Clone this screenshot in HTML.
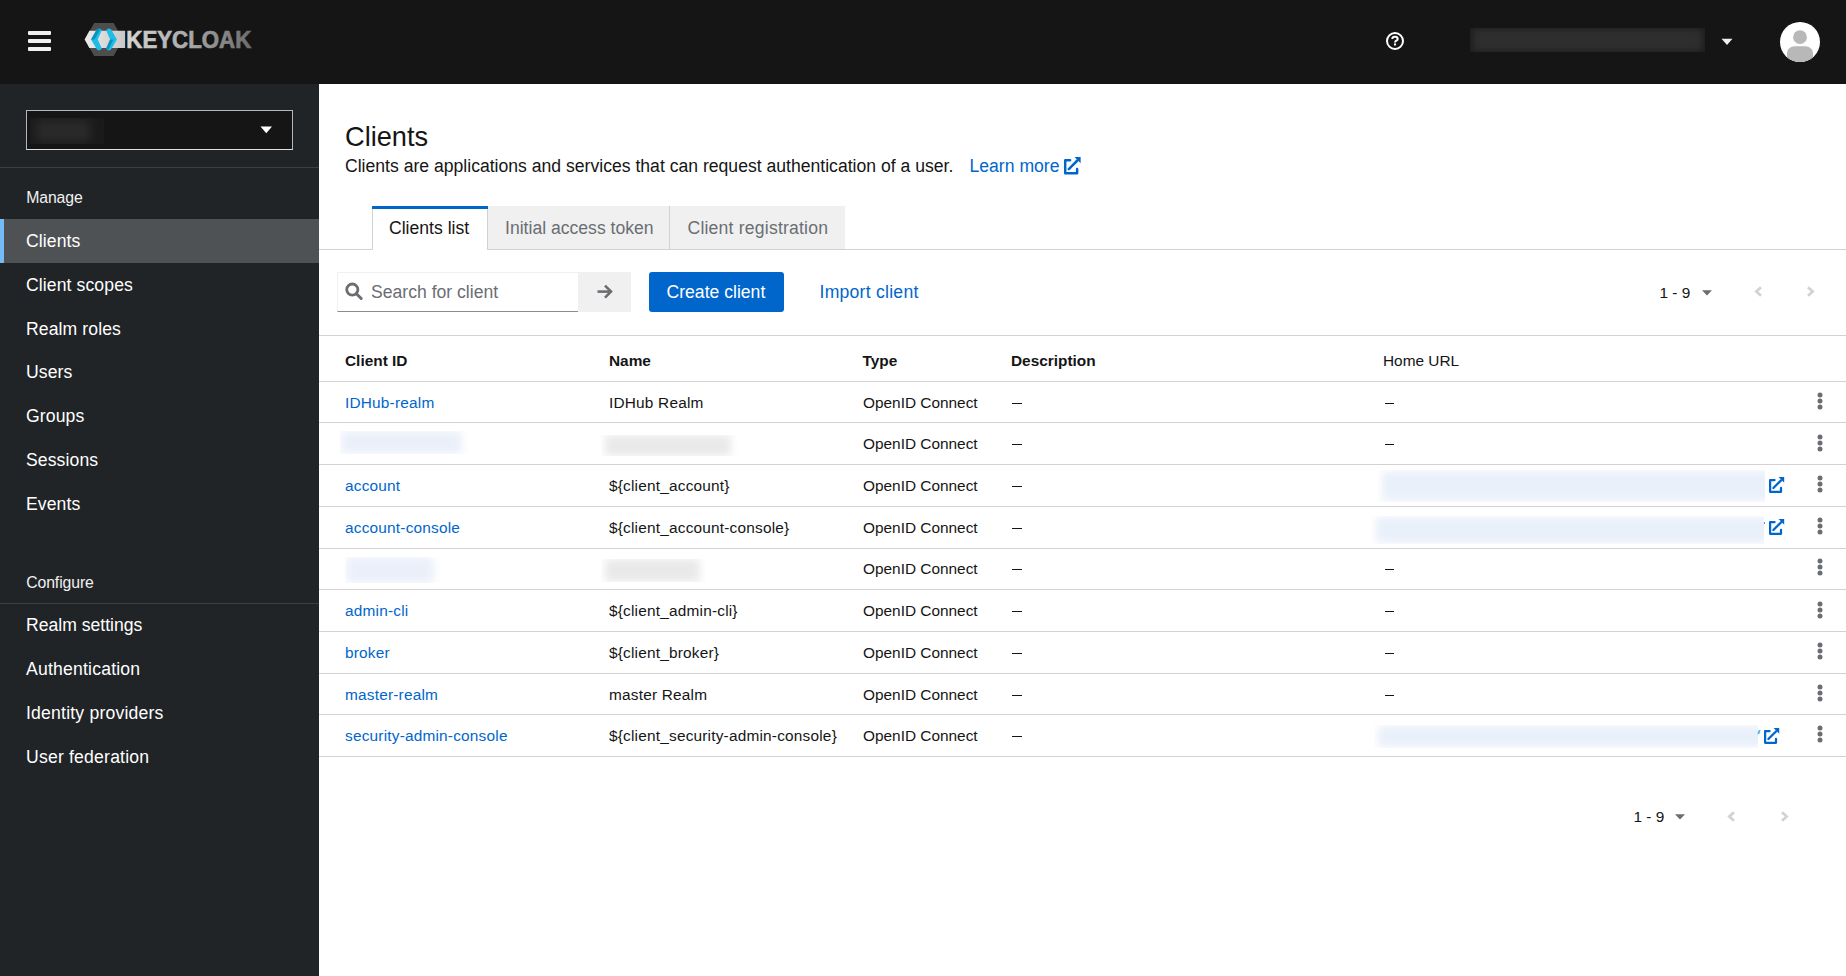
<!DOCTYPE html>
<html><head><meta charset="utf-8"><title>Clients</title>
<style>
*{box-sizing:border-box;margin:0;padding:0}
html,body{width:1846px;height:976px;overflow:hidden;background:#fff;font-family:"Liberation Sans", sans-serif}
.t{position:absolute;white-space:nowrap}
.r{position:absolute;display:block}
</style></head><body>
<div class="r" style="left:0px;top:0px;width:1846px;height:84px;background:#151515"></div>
<div class="r" style="left:28px;top:31px;width:23px;height:4px;background:#f0f0f0;border-radius:1px"></div>
<div class="r" style="left:28px;top:39px;width:23px;height:4px;background:#f0f0f0;border-radius:1px"></div>
<div class="r" style="left:28px;top:47px;width:23px;height:4px;background:#f0f0f0;border-radius:1px"></div>
<svg class="r" style="left:80px;top:18px" width="180" height="46" viewBox="0 0 180 46">
<defs>
<linearGradient id="kg" x1="0" y1="0" x2="1" y2="0"><stop offset="0" stop-color="#d6d6d6"/><stop offset="0.5" stop-color="#a8a8a8"/><stop offset="1" stop-color="#6c6c6c"/></linearGradient>
<linearGradient id="bg" x1="0" y1="0" x2="1" y2="0"><stop offset="0" stop-color="#ececec"/><stop offset="1" stop-color="#c8c8c8"/></linearGradient>
</defs>
<polygon points="14.2,5 33.6,5 43,21.45 33.6,37.9 14.2,37.9 4.8,21.45" fill="#4d4d4d"/>
<polygon points="4.65,21.4 9.4,12.7 45.1,12.7 45.1,29.9 9.4,29.9" fill="url(#bg)"/>
<polygon points="11,21.4 17.1,11.1 19.6,10.4 21.9,12 17.8,21.4 21.9,30.8 19.6,32.4 17.1,31.7" fill="#1cbde6"/>
<polygon points="11,21.4 17.1,11.1 19.6,10.4 20.3,11 14.6,21.4" fill="#0a92bd"/>
<polygon points="36.95,21.4 30.85,11.1 28.35,10.4 26.05,12 30.15,21.4 26.05,30.8 28.35,32.4 30.85,31.7" fill="#1cbde6"/>
<polygon points="26.05,30.8 30.15,21.4 33.4,21.4 28.5,31.5" fill="#0a92bd"/>
<text x="46.3" y="30" font-family="Liberation Sans" font-weight="bold" font-size="24.2" fill="url(#kg)" stroke="url(#kg)" stroke-width="0.7" textLength="125" lengthAdjust="spacingAndGlyphs">KEYCLOAK</text>
</svg>
<svg class="r" style="left:1385px;top:31px" width="20" height="20" viewBox="0 0 20 20">
<circle cx="10" cy="10" r="8" fill="none" stroke="#fff" stroke-width="2"/>
<path d="M7.3 7.9 C7.3 4.9 12.7 4.9 12.7 7.9 C12.7 9.8 10 9.6 10 11.4" fill="none" stroke="#fff" stroke-width="2"/>
<rect x="8.95" y="12.4" width="2.1" height="2.1" fill="#fff"/>
</svg>
<div class="r" style="left:1470px;top:28px;width:235px;height:24px;overflow:hidden;background:#1d1d1d"><div style="position:absolute;left:3px;top:1px;right:3px;bottom:1px;background:#2e2e2e;filter:blur(3px)"></div></div>
<svg class="r" style="left:1721px;top:38px" width="12" height="8" viewBox="0 0 12 8"><polygon points="0.5,0.7 11.5,0.7 6,7" fill="#f0f0f0"/></svg>
<svg class="r" style="left:1779px;top:21px" width="42" height="42" viewBox="0 0 42 42">
<defs><clipPath id="av"><circle cx="21" cy="21" r="20"/></clipPath></defs>
<circle cx="21" cy="21" r="20" fill="#fff"/>
<g clip-path="url(#av)">
<circle cx="21" cy="16.2" r="6.9" fill="#b8b8b8"/>
<path d="M8 42 V33 C8 27.8 11.5 25.3 17 25.3 H25 C30.5 25.3 34 27.8 34 33 V42 Z" fill="#b8b8b8"/>
</g></svg>
<div class="r" style="left:0px;top:84px;width:319px;height:892px;background:#212427"></div>
<div class="r" style="left:26px;top:110px;width:267px;height:40px;background:#151515;border:1px solid #b4b6b8;border-bottom-color:#e0e0e0"></div>
<div class="r" style="left:30px;top:118px;width:74px;height:26px;overflow:hidden;background:#1a1a1a"><div style="position:absolute;left:6px;top:2px;right:14px;bottom:2px;background:#2a2a2a;filter:blur(5px)"></div></div>
<svg class="r" style="left:260px;top:126px" width="13" height="8" viewBox="0 0 13 8"><polygon points="0.5,0.5 12,0.5 6.25,7.2" fill="#fff"/></svg>
<div class="r" style="left:0px;top:167px;width:319px;height:1px;background:#3c3f42"></div>
<div class="t" style="left:26.20px;top:190.23px;font-size:15.8px;line-height:15.8px;color:#f0f0f0;font-weight:normal;letter-spacing:-0.1px">Manage</div>
<div class="r" style="left:0px;top:219px;width:319px;height:44px;background:#4f5255"></div>
<div class="r" style="left:0px;top:219px;width:4px;height:44px;background:#73bcf7"></div>
<div class="t" style="left:26.00px;top:232.70px;font-size:17.6px;line-height:17.6px;color:#fff;font-weight:normal;letter-spacing:0.1px">Clients</div>
<div class="t" style="left:26.00px;top:276.60px;font-size:17.6px;line-height:17.6px;color:#fff;font-weight:normal;letter-spacing:0.1px">Client scopes</div>
<div class="t" style="left:26.00px;top:320.50px;font-size:17.6px;line-height:17.6px;color:#fff;font-weight:normal;letter-spacing:0.1px">Realm roles</div>
<div class="t" style="left:26.00px;top:364.40px;font-size:17.6px;line-height:17.6px;color:#fff;font-weight:normal;letter-spacing:0.1px">Users</div>
<div class="t" style="left:26.00px;top:408.30px;font-size:17.6px;line-height:17.6px;color:#fff;font-weight:normal;letter-spacing:0.1px">Groups</div>
<div class="t" style="left:26.00px;top:452.20px;font-size:17.6px;line-height:17.6px;color:#fff;font-weight:normal;letter-spacing:0.1px">Sessions</div>
<div class="t" style="left:26.00px;top:496.10px;font-size:17.6px;line-height:17.6px;color:#fff;font-weight:normal;letter-spacing:0.1px">Events</div>
<div class="t" style="left:26.20px;top:575.23px;font-size:15.8px;line-height:15.8px;color:#f0f0f0;font-weight:normal;letter-spacing:-0.1px">Configure</div>
<div class="r" style="left:0px;top:603px;width:319px;height:1px;background:#3c3f42"></div>
<div class="t" style="left:26.00px;top:616.70px;font-size:17.6px;line-height:17.6px;color:#fff;font-weight:normal;letter-spacing:0px">Realm settings</div>
<div class="t" style="left:26.00px;top:660.65px;font-size:17.6px;line-height:17.6px;color:#fff;font-weight:normal;letter-spacing:0.2px">Authentication</div>
<div class="t" style="left:26.00px;top:704.60px;font-size:17.6px;line-height:17.6px;color:#fff;font-weight:normal;letter-spacing:0.2px">Identity providers</div>
<div class="t" style="left:26.00px;top:748.55px;font-size:17.6px;line-height:17.6px;color:#fff;font-weight:normal;letter-spacing:0.2px">User federation</div>
<div class="t" style="left:345.00px;top:122.98px;font-size:27.2px;line-height:27.2px;color:#151515;font-weight:normal;">Clients</div>
<div class="t" style="left:345.00px;top:158.20px;font-size:17.6px;line-height:17.6px;color:#151515;font-weight:normal;">Clients are applications and services that can request authentication of a user.</div>
<div class="t" style="left:969.50px;top:158.20px;font-size:17.6px;line-height:17.6px;color:#06c;font-weight:normal;">Learn more</div>
<svg class="r" style="left:1063.5px;top:157px" width="17.5" height="17.5" viewBox="0 0 16 16"><path d="M5.6 3.0 H1.1 V14.8 H12.0 V10.9" fill="none" stroke="#06c" stroke-width="2.25" stroke-linejoin="round" stroke-linecap="round"/><path d="M4.4 11 L12.2 3.2" stroke="#06c" stroke-width="2.3" stroke-linecap="round"/><polygon points="9.6,0 15.2,0 15.2,5.8" fill="#06c"/></svg>
<div class="r" style="left:319px;top:249px;width:1527px;height:1px;background:#d2d2d2"></div>
<div class="r" style="left:372px;top:206px;width:116px;height:44px;background:#fff;border-left:1px solid #d2d2d2;border-right:1px solid #d2d2d2"></div>
<div class="r" style="left:372px;top:206px;width:116px;height:3px;background:#06c"></div>
<div class="r" style="left:488px;top:206px;width:181px;height:43px;background:#f0f0f0"></div>
<div class="r" style="left:669px;top:206px;width:1px;height:43px;background:#d2d2d2"></div>
<div class="r" style="left:670px;top:206px;width:175px;height:43px;background:#f0f0f0"></div>
<div class="t" style="left:389.00px;top:219.60px;font-size:17.6px;line-height:17.6px;color:#151515;font-weight:normal;">Clients list</div>
<div class="t" style="left:505.00px;top:219.60px;font-size:17.6px;line-height:17.6px;color:#6a6e73;font-weight:normal;">Initial access token</div>
<div class="t" style="left:687.50px;top:219.60px;font-size:17.6px;line-height:17.6px;color:#6a6e73;font-weight:normal;letter-spacing:0.2px">Client registration</div>
<div class="r" style="left:337px;top:272px;width:241px;height:40px;background:#fff;border:1px solid #f0f0f0;border-right:none;border-bottom:1px solid #8a8d90"></div>
<svg class="r" style="left:344px;top:282px" width="20" height="19" viewBox="0 0 20 19">
<circle cx="8.3" cy="7.6" r="5.6" fill="none" stroke="#6a6e73" stroke-width="2.8"/>
<path d="M12.4 11.7 L17.2 16.5" stroke="#6a6e73" stroke-width="3" stroke-linecap="round"/>
</svg>
<div class="t" style="left:371.00px;top:283.60px;font-size:17.6px;line-height:17.6px;color:#6a6e73;font-weight:normal;">Search for client</div>
<div class="r" style="left:578px;top:272px;width:53px;height:40px;background:#f0f0f0"></div>
<svg class="r" style="left:596px;top:283px" width="18" height="17" viewBox="0 0 18 17">
<path d="M1.5 8.6 H15" stroke="#6a6e73" stroke-width="2.6"/>
<path d="M9 2.6 L15 8.6 L9 14.6" fill="none" stroke="#6a6e73" stroke-width="2.6"/>
</svg>
<div class="r" style="left:649px;top:272px;width:135px;height:40px;background:#06c;border-radius:3px"></div>
<div class="t" style="left:666.50px;top:283.70px;font-size:17.6px;line-height:17.6px;color:#fff;font-weight:normal;">Create client</div>
<div class="t" style="left:819.50px;top:283.60px;font-size:17.6px;line-height:17.6px;color:#06c;font-weight:normal;letter-spacing:0.25px">Import client</div>
<div class="t" style="left:1659.50px;top:284.86px;font-size:15.4px;line-height:15.4px;color:#151515;font-weight:normal;">1 - 9</div>
<svg class="r" style="left:1702px;top:289.9px" width="10" height="6" viewBox="0 0 10 6"><polygon points="0,0.2 10,0.2 5,5.5" fill="#6a6e73"/></svg>
<svg class="r" style="left:1754px;top:286.4px" width="9" height="11" viewBox="0 0 9 11"><path d="M7 1.2 L2.3 5.5 L7 9.8" fill="none" stroke="#d2d2d2" stroke-width="2.7"/></svg>
<svg class="r" style="left:1805.8px;top:286.4px" width="9" height="11" viewBox="0 0 9 11"><path d="M2 1.2 L6.7 5.5 L2 9.8" fill="none" stroke="#d2d2d2" stroke-width="2.7"/></svg>
<div class="r" style="left:319px;top:335px;width:1527px;height:1px;background:#d2d2d2"></div>
<div class="t" style="left:345.00px;top:352.96px;font-size:15.4px;line-height:15.4px;color:#151515;font-weight:bold;">Client ID</div>
<div class="t" style="left:609.00px;top:352.96px;font-size:15.4px;line-height:15.4px;color:#151515;font-weight:bold;">Name</div>
<div class="t" style="left:862.50px;top:352.96px;font-size:15.4px;line-height:15.4px;color:#151515;font-weight:bold;">Type</div>
<div class="t" style="left:1011.00px;top:352.96px;font-size:15.4px;line-height:15.4px;color:#151515;font-weight:bold;">Description</div>
<div class="t" style="left:1383.00px;top:352.96px;font-size:15.4px;line-height:15.4px;color:#151515;font-weight:normal;">Home URL</div>
<div class="r" style="left:319px;top:381px;width:1527px;height:1px;background:#d2d2d2"></div>
<div class="t" style="left:345.00px;top:395.06px;font-size:15.4px;line-height:15.4px;color:#06c;font-weight:normal;letter-spacing:0.2px">IDHub-realm</div>
<div class="t" style="left:609.00px;top:395.06px;font-size:15.4px;line-height:15.4px;color:#151515;font-weight:normal;letter-spacing:0.2px">IDHub Realm</div>
<div class="t" style="left:863.00px;top:395.06px;font-size:15.4px;line-height:15.4px;color:#151515;font-weight:normal;">OpenID Connect</div>
<div class="r" style="left:1012px;top:403px;width:10px;height:1.4px;background:#151515"></div>
<div class="r" style="left:1385px;top:403px;width:9px;height:1.4px;background:#151515"></div>
<svg class="r" style="left:1816.5px;top:392.30px" width="6" height="18" viewBox="0 0 6 18"><circle cx="3" cy="3.05" r="2.5" fill="#6a6e73"/><circle cx="3" cy="9" r="2.5" fill="#6a6e73"/><circle cx="3" cy="14.95" r="2.5" fill="#6a6e73"/></svg>
<div class="r" style="left:319px;top:422px;width:1527px;height:1px;background:#d2d2d2"></div>
<div class="r" style="left:340px;top:431px;width:129px;height:23px;overflow:hidden;background:#fff"><div style="position:absolute;left:1px;top:0px;right:7px;bottom:0px;background:#eaf0fa;filter:blur(4px)"></div></div>
<div class="r" style="left:601px;top:435px;width:136px;height:21px;overflow:hidden;background:#fff"><div style="position:absolute;left:4px;top:0px;right:6px;bottom:0px;background:#e9e9e9;filter:blur(4px)"></div></div>
<div class="t" style="left:863.00px;top:436.26px;font-size:15.4px;line-height:15.4px;color:#151515;font-weight:normal;">OpenID Connect</div>
<div class="r" style="left:1012px;top:444px;width:10px;height:1.4px;background:#151515"></div>
<div class="r" style="left:1385px;top:444px;width:9px;height:1.4px;background:#151515"></div>
<svg class="r" style="left:1816.5px;top:433.50px" width="6" height="18" viewBox="0 0 6 18"><circle cx="3" cy="3.05" r="2.5" fill="#6a6e73"/><circle cx="3" cy="9" r="2.5" fill="#6a6e73"/><circle cx="3" cy="14.95" r="2.5" fill="#6a6e73"/></svg>
<div class="r" style="left:319px;top:464px;width:1527px;height:1px;background:#d2d2d2"></div>
<div class="t" style="left:345.00px;top:478.16px;font-size:15.4px;line-height:15.4px;color:#06c;font-weight:normal;letter-spacing:0.2px">account</div>
<div class="t" style="left:609.00px;top:478.16px;font-size:15.4px;line-height:15.4px;color:#151515;font-weight:normal;letter-spacing:0.2px">${client_account}</div>
<div class="t" style="left:863.00px;top:478.16px;font-size:15.4px;line-height:15.4px;color:#151515;font-weight:normal;">OpenID Connect</div>
<div class="r" style="left:1012px;top:486px;width:10px;height:1.4px;background:#151515"></div>
<div class="r" style="left:1378px;top:470px;width:387px;height:32px;overflow:hidden;background:#fff"><div style="position:absolute;left:4px;top:1px;right:-8px;bottom:1px;background:#e9f0fa;filter:blur(4px)"></div></div>
<svg class="r" style="left:1769px;top:477px" width="16" height="16" viewBox="0 0 16 16"><path d="M5.6 3.0 H1.1 V14.8 H12.0 V10.9" fill="none" stroke="#06c" stroke-width="2.25" stroke-linejoin="round" stroke-linecap="round"/><path d="M4.4 11 L12.2 3.2" stroke="#06c" stroke-width="2.3" stroke-linecap="round"/><polygon points="9.6,0 15.2,0 15.2,5.8" fill="#06c"/></svg>
<svg class="r" style="left:1816.5px;top:475.40px" width="6" height="18" viewBox="0 0 6 18"><circle cx="3" cy="3.05" r="2.5" fill="#6a6e73"/><circle cx="3" cy="9" r="2.5" fill="#6a6e73"/><circle cx="3" cy="14.95" r="2.5" fill="#6a6e73"/></svg>
<div class="r" style="left:319px;top:506px;width:1527px;height:1px;background:#d2d2d2"></div>
<div class="t" style="left:345.00px;top:520.06px;font-size:15.4px;line-height:15.4px;color:#06c;font-weight:normal;letter-spacing:0.2px">account-console</div>
<div class="t" style="left:609.00px;top:520.06px;font-size:15.4px;line-height:15.4px;color:#151515;font-weight:normal;letter-spacing:0.2px">${client_account-console}</div>
<div class="t" style="left:863.00px;top:520.06px;font-size:15.4px;line-height:15.4px;color:#151515;font-weight:normal;">OpenID Connect</div>
<div class="r" style="left:1012px;top:528px;width:10px;height:1.4px;background:#151515"></div>
<div class="r" style="left:1372px;top:516px;width:392px;height:28px;overflow:hidden;background:#fff"><div style="position:absolute;left:4px;top:1px;right:-8px;bottom:1px;background:#e9f0fa;filter:blur(4px)"></div></div>
<svg class="r" style="left:1769px;top:519px" width="16" height="16" viewBox="0 0 16 16"><path d="M5.6 3.0 H1.1 V14.8 H12.0 V10.9" fill="none" stroke="#06c" stroke-width="2.25" stroke-linejoin="round" stroke-linecap="round"/><path d="M4.4 11 L12.2 3.2" stroke="#06c" stroke-width="2.3" stroke-linecap="round"/><polygon points="9.6,0 15.2,0 15.2,5.8" fill="#06c"/></svg>
<div class="r" style="left:1764px;top:522px;width:1px;height:2px;background:#3aa0f0"></div>
<svg class="r" style="left:1816.5px;top:517.30px" width="6" height="18" viewBox="0 0 6 18"><circle cx="3" cy="3.05" r="2.5" fill="#6a6e73"/><circle cx="3" cy="9" r="2.5" fill="#6a6e73"/><circle cx="3" cy="14.95" r="2.5" fill="#6a6e73"/></svg>
<div class="r" style="left:319px;top:548px;width:1527px;height:1px;background:#d2d2d2"></div>
<div class="r" style="left:345px;top:557px;width:96px;height:26px;overflow:hidden;background:#fff"><div style="position:absolute;left:1px;top:0px;right:7px;bottom:0px;background:#eaf0fa;filter:blur(4px)"></div></div>
<div class="r" style="left:601px;top:559px;width:105px;height:23px;overflow:hidden;background:#fff"><div style="position:absolute;left:4px;top:0px;right:6px;bottom:0px;background:#e9e9e9;filter:blur(4px)"></div></div>
<div class="t" style="left:863.00px;top:560.96px;font-size:15.4px;line-height:15.4px;color:#151515;font-weight:normal;">OpenID Connect</div>
<div class="r" style="left:1012px;top:569px;width:10px;height:1.4px;background:#151515"></div>
<div class="r" style="left:1385px;top:569px;width:9px;height:1.4px;background:#151515"></div>
<svg class="r" style="left:1816.5px;top:558.20px" width="6" height="18" viewBox="0 0 6 18"><circle cx="3" cy="3.05" r="2.5" fill="#6a6e73"/><circle cx="3" cy="9" r="2.5" fill="#6a6e73"/><circle cx="3" cy="14.95" r="2.5" fill="#6a6e73"/></svg>
<div class="r" style="left:319px;top:589px;width:1527px;height:1px;background:#d2d2d2"></div>
<div class="t" style="left:345.00px;top:603.26px;font-size:15.4px;line-height:15.4px;color:#06c;font-weight:normal;letter-spacing:0.2px">admin-cli</div>
<div class="t" style="left:609.00px;top:603.26px;font-size:15.4px;line-height:15.4px;color:#151515;font-weight:normal;letter-spacing:0.2px">${client_admin-cli}</div>
<div class="t" style="left:863.00px;top:603.26px;font-size:15.4px;line-height:15.4px;color:#151515;font-weight:normal;">OpenID Connect</div>
<div class="r" style="left:1012px;top:611px;width:10px;height:1.4px;background:#151515"></div>
<div class="r" style="left:1385px;top:611px;width:9px;height:1.4px;background:#151515"></div>
<svg class="r" style="left:1816.5px;top:600.50px" width="6" height="18" viewBox="0 0 6 18"><circle cx="3" cy="3.05" r="2.5" fill="#6a6e73"/><circle cx="3" cy="9" r="2.5" fill="#6a6e73"/><circle cx="3" cy="14.95" r="2.5" fill="#6a6e73"/></svg>
<div class="r" style="left:319px;top:631px;width:1527px;height:1px;background:#d2d2d2"></div>
<div class="t" style="left:345.00px;top:644.76px;font-size:15.4px;line-height:15.4px;color:#06c;font-weight:normal;letter-spacing:0.2px">broker</div>
<div class="t" style="left:609.00px;top:644.76px;font-size:15.4px;line-height:15.4px;color:#151515;font-weight:normal;letter-spacing:0.2px">${client_broker}</div>
<div class="t" style="left:863.00px;top:644.76px;font-size:15.4px;line-height:15.4px;color:#151515;font-weight:normal;">OpenID Connect</div>
<div class="r" style="left:1012px;top:653px;width:10px;height:1.4px;background:#151515"></div>
<div class="r" style="left:1385px;top:653px;width:9px;height:1.4px;background:#151515"></div>
<svg class="r" style="left:1816.5px;top:642.00px" width="6" height="18" viewBox="0 0 6 18"><circle cx="3" cy="3.05" r="2.5" fill="#6a6e73"/><circle cx="3" cy="9" r="2.5" fill="#6a6e73"/><circle cx="3" cy="14.95" r="2.5" fill="#6a6e73"/></svg>
<div class="r" style="left:319px;top:673px;width:1527px;height:1px;background:#d2d2d2"></div>
<div class="t" style="left:345.00px;top:686.76px;font-size:15.4px;line-height:15.4px;color:#06c;font-weight:normal;letter-spacing:0.2px">master-realm</div>
<div class="t" style="left:609.00px;top:686.76px;font-size:15.4px;line-height:15.4px;color:#151515;font-weight:normal;letter-spacing:0.2px">master Realm</div>
<div class="t" style="left:863.00px;top:686.76px;font-size:15.4px;line-height:15.4px;color:#151515;font-weight:normal;">OpenID Connect</div>
<div class="r" style="left:1012px;top:695px;width:10px;height:1.4px;background:#151515"></div>
<div class="r" style="left:1385px;top:695px;width:9px;height:1.4px;background:#151515"></div>
<svg class="r" style="left:1816.5px;top:684.00px" width="6" height="18" viewBox="0 0 6 18"><circle cx="3" cy="3.05" r="2.5" fill="#6a6e73"/><circle cx="3" cy="9" r="2.5" fill="#6a6e73"/><circle cx="3" cy="14.95" r="2.5" fill="#6a6e73"/></svg>
<div class="r" style="left:319px;top:714px;width:1527px;height:1px;background:#d2d2d2"></div>
<div class="t" style="left:345.00px;top:728.16px;font-size:15.4px;line-height:15.4px;color:#06c;font-weight:normal;letter-spacing:0.2px">security-admin-console</div>
<div class="t" style="left:609.00px;top:728.16px;font-size:15.4px;line-height:15.4px;color:#151515;font-weight:normal;letter-spacing:0.2px">${client_security-admin-console}</div>
<div class="t" style="left:863.00px;top:728.16px;font-size:15.4px;line-height:15.4px;color:#151515;font-weight:normal;">OpenID Connect</div>
<div class="r" style="left:1012px;top:736px;width:10px;height:1.4px;background:#151515"></div>
<div class="r" style="left:1374px;top:725px;width:384px;height:23px;overflow:hidden;background:#fff"><div style="position:absolute;left:4px;top:1px;right:-8px;bottom:1px;background:#e9f0fa;filter:blur(4px)"></div></div>
<svg class="r" style="left:1764px;top:728px" width="16" height="16" viewBox="0 0 16 16"><path d="M5.6 3.0 H1.1 V14.8 H12.0 V10.9" fill="none" stroke="#06c" stroke-width="2.25" stroke-linejoin="round" stroke-linecap="round"/><path d="M4.4 11 L12.2 3.2" stroke="#06c" stroke-width="2.3" stroke-linecap="round"/><polygon points="9.6,0 15.2,0 15.2,5.8" fill="#06c"/></svg>
<div class="r" style="left:1758px;top:730px;width:2px;height:4px;background:#5ab0f0;transform:skewX(-20deg)"></div>
<svg class="r" style="left:1816.5px;top:725.40px" width="6" height="18" viewBox="0 0 6 18"><circle cx="3" cy="3.05" r="2.5" fill="#6a6e73"/><circle cx="3" cy="9" r="2.5" fill="#6a6e73"/><circle cx="3" cy="14.95" r="2.5" fill="#6a6e73"/></svg>
<div class="r" style="left:319px;top:756px;width:1527px;height:1px;background:#d2d2d2"></div>
<div class="t" style="left:1633.50px;top:808.96px;font-size:15.4px;line-height:15.4px;color:#151515;font-weight:normal;">1 - 9</div>
<svg class="r" style="left:1675px;top:814px" width="10" height="6" viewBox="0 0 10 6"><polygon points="0,0.2 10,0.2 5,5.5" fill="#6a6e73"/></svg>
<svg class="r" style="left:1726.7px;top:810.5px" width="9" height="11" viewBox="0 0 9 11"><path d="M7 1.2 L2.3 5.5 L7 9.8" fill="none" stroke="#d2d2d2" stroke-width="2.7"/></svg>
<svg class="r" style="left:1779.7px;top:810.5px" width="9" height="11" viewBox="0 0 9 11"><path d="M2 1.2 L6.7 5.5 L2 9.8" fill="none" stroke="#d2d2d2" stroke-width="2.7"/></svg>
</body></html>
